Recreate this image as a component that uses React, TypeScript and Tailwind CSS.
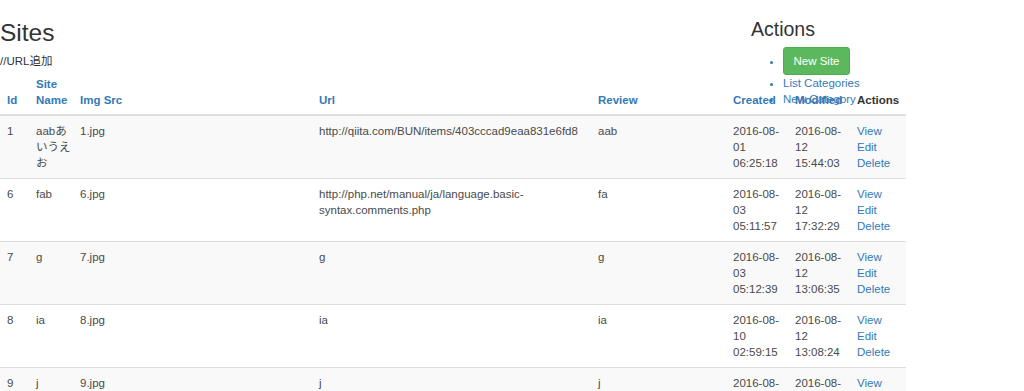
import React from 'react';

const FONT = "font-['Liberation_Sans','Noto_Sans_CJK_JP',Arial,sans-serif]";

type Site = {
  id: number;
  name: string[];
  img: string;
  url: string[];
  review: string;
  created: string[];
  modified: string[];
};

const SITES: Site[] = [
  {
    id: 1,
    name: ['aabあ', 'いうえ', 'お'],
    img: '1.jpg',
    url: ['http://qiita.com/BUN/items/403cccad9eaa831e6fd8'],
    review: 'aab',
    created: ['2016-08-', '01', '06:25:18'],
    modified: ['2016-08-', '12', '15:44:03'],
  },
  {
    id: 6,
    name: ['fab'],
    img: '6.jpg',
    url: ['http://php.net/manual/ja/language.basic-', 'syntax.comments.php'],
    review: 'fa',
    created: ['2016-08-', '03', '05:11:57'],
    modified: ['2016-08-', '12', '17:32:29'],
  },
  {
    id: 7,
    name: ['g'],
    img: '7.jpg',
    url: ['g'],
    review: 'g',
    created: ['2016-08-', '03', '05:12:39'],
    modified: ['2016-08-', '12', '13:06:35'],
  },
  {
    id: 8,
    name: ['ia'],
    img: '8.jpg',
    url: ['ia'],
    review: 'ia',
    created: ['2016-08-', '10', '02:59:15'],
    modified: ['2016-08-', '12', '13:08:24'],
  },
  {
    id: 9,
    name: ['j'],
    img: '9.jpg',
    url: ['j'],
    review: 'j',
    created: ['2016-08-', '10', '03:00:41'],
    modified: ['2016-08-', '12', '13:08:45'],
  },
];

function Lines({ lines }: { lines: string[] }) {
  return (
    <>
      {lines.map((l, i) => (
        <div key={i} className="whitespace-nowrap">
          {l}
        </div>
      ))}
    </>
  );
}

const th = 'px-[7px] pt-[7px] pb-[6px] text-left align-bottom font-bold border-b-2 border-[#dddddd]';
const td = 'px-[7px] pt-[7px] pb-[7px] align-top border-t border-[#dddddd]';

export default function App() {
  return (
    <div className={`relative min-h-[391px] bg-white text-[11.5px] leading-[16px] text-[#333333] ${FONT}`}>
      {/* Sites */}
      <div className="w-[906px] pt-[19px]">
        <h2 className="text-[24.5px] leading-[27px] text-[#333333]">Sites</h2>
        <p className="mt-[7px]">//URL追加</p>

        <table className="w-[906px] table-fixed">
          <colgroup>
            <col className="w-[29px]" />
            <col className="w-[44px]" />
            <col className="w-[239px]" />
            <col className="w-[279px]" />
            <col className="w-[135px]" />
            <col className="w-[62px]" />
            <col className="w-[62px]" />
            <col className="w-[56px]" />
          </colgroup>
          <thead>
            <tr className="text-[#337ab7]">
              <th className={th}>Id</th>
              <th className={th}>
                Site
                <br />
                Name
              </th>
              <th className={th}>Img Src</th>
              <th className={th}>Url</th>
              <th className={th}>Review</th>
              <th className={th}>Created</th>
              <th className={th}>Modified</th>
              <th className={`${th} text-[#333333]`}>Actions</th>
            </tr>
          </thead>
          <tbody className="text-[#4a4a4a]">
            {SITES.map((s, i) => (
              <tr key={s.id} className={i % 2 === 0 ? 'bg-[#f9f9f9]' : 'bg-white'}>
                <td className={td}>{s.id}</td>
                <td className={td}>
                  <Lines lines={s.name} />
                </td>
                <td className={td}>{s.img}</td>
                <td className={td}>
                  <Lines lines={s.url} />
                </td>
                <td className={td}>{s.review}</td>
                <td className={td}>
                  <Lines lines={s.created} />
                </td>
                <td className={td}>
                  <Lines lines={s.modified} />
                </td>
                <td className={`${td} text-[#337ab7]`}>
                  <div>View</div>
                  <div>Edit</div>
                  <div>Delete</div>
                </td>
              </tr>
            ))}
          </tbody>
        </table>
      </div>

      {/* Actions nav (floats over the table header) */}
      <div className="absolute left-[751px] top-[18px]">
        <h3 className="text-[19.5px] leading-[22px] text-[#333333]">Actions</h3>
        <ul className="mt-[7px] list-disc pl-[32px] text-[#337ab7]">
          <li>
            <span className="inline-block rounded-[3px] border border-[#4cae4c] bg-[#5cb85c] px-[9.5px] py-[5px] text-white">
              New Site
            </span>
          </li>
          <li>List Categories</li>
          <li>New Category</li>
        </ul>
      </div>
    </div>
  );
}
